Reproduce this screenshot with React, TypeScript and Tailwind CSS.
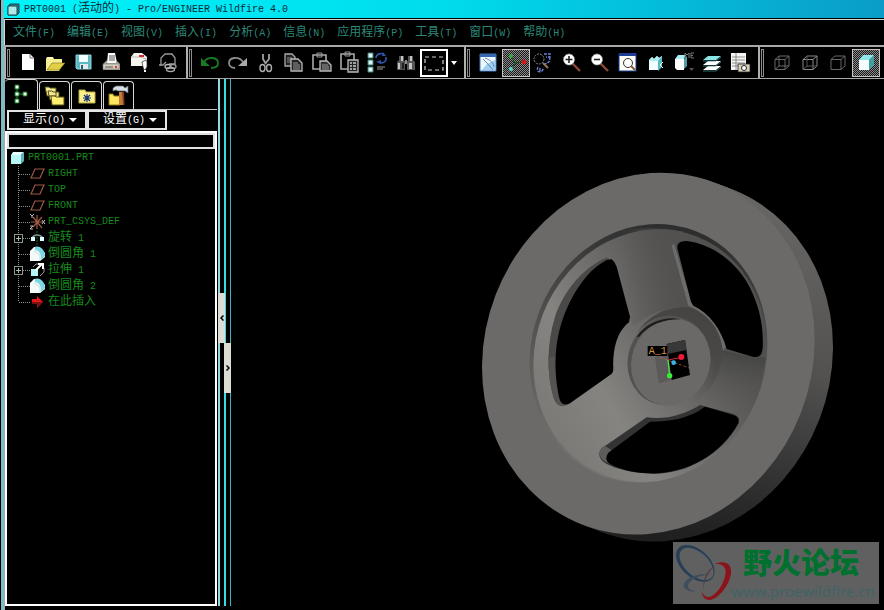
import { ReactNode, useState } from 'react'

interface Tool {
  name: string
  icon: ReactNode
}

interface TreeNode {
  label: string
  icon: ReactNode
  expandable?: boolean
}

const menus = ['文件(F)', '编辑(E)', '视图(V)', '插入(I)', '分析(A)', '信息(N)', '应用程序(P)', '工具(T)', '窗口(W)', '帮助(H)']

// Chinese runs are set two cells wide, latin runs one cell wide
function Mixed({ text }: { text: string }) {
  return (
    <>
      {text.split(/([\u4e00-\u9fff]+)/).map((part, i) => (
        <span key={i} className={i % 2 ? 'text-[12px]' : 'text-[10px]'}>{part}</span>
      ))}
    </>
  )
}

function Icon({ children, size = 24 }: { children: ReactNode; size?: number }) {
  return (
    <svg width={size} height={size} viewBox={`0 0 ${size} ${size}`} fill="none" className="shrink-0" aria-hidden="true">
      {children}
    </svg>
  )
}

const magnifier = (
  <>
    <path d="M12 12l8 8" stroke="#8a4a3a" strokeWidth="2.4" />
    <circle cx="9" cy="8.500" r="5.500" fill="#fff" stroke="#999" strokeDasharray="2 1" />
  </>
)

const cube = 'M5 8.500h10v10H5zM5 8.500L9 5h10l-4 3.500M19 5v10l-4 3.500'

const fileTools: Tool[] = [
  {
    name: '新建',
    icon: <Icon><path d="M6 3h8l4 4v12H6z" fill="#fff" /><path d="M14 3v4h4" stroke="#777" /></Icon>,
  },
  {
    name: '打开',
    icon: <Icon><path d="M2 8l1-2h6l1 2h8v4H2z" fill="#fff7b0" /><path d="M2 8v12h13l5-8h-2V8" fill="#f6ee90" /><path d="M3 19l5-7h13l-6 7z" fill="#e3cf45" stroke="#7d7020" strokeWidth=".6" /></Icon>,
  },
  {
    name: '保存',
    icon: <Icon><path d="M4 4h15v14H5l-1-1z" fill="#5bb9c4" stroke="#8fd6da" /><path d="M7 4h9v7H7z" fill="#f4ffff" /><path d="M8 13h8v5H8z" fill="#e8e8e8" /><path d="M9 14h2v4H9z" fill="#206070" /></Icon>,
  },
  {
    name: '打印',
    icon: <Icon><path d="M8 2h7l2 10H7z" fill="#fff" /><path d="M9 5h6M9 7h6M9 9h6" stroke="#555" /><path d="M3 13l4-4v3h9V9l4 4v6H3z" fill="#a9a698" /><path d="M3 13h16v5H3z" fill="#d4d0c2" stroke="#777" strokeWidth=".6" /><path d="M5 16h8" stroke="#555" /><path d="M15 15h2v2h-2z" fill="#d33" /></Icon>,
  },
  {
    name: '发送',
    icon: <Icon><path d="M3 6l3-4h8l5 4v9H3z" fill="#f4f4ee" /><path d="M3 6h9l7 2" stroke="#b9b9b0" /><path d="M11 4h5v2h-5z" fill="#c33" /><path d="M14 11l4-2 1 2v5l-2 3h-1l-1-3z" fill="#fff" stroke="#222" strokeWidth=".7" /><path d="M16 19h2v2h-2z" fill="#fff" /></Icon>,
  },
  {
    name: '超链接',
    icon: <Icon><path d="M5 15V7l4-4h7l3 4v6h-6M3 14h4l3-3" stroke="#999" strokeWidth="1.3" /><ellipse cx="12" cy="15.500" rx="3" ry="2" stroke="#bbb" strokeWidth="1.300" /><ellipse cx="17" cy="15.500" rx="3" ry="2" stroke="#999" strokeWidth="1.300" /><ellipse cx="14.500" cy="18.500" rx="4" ry="2" stroke="#aaa" strokeWidth="1.300" /></Icon>,
  },
]

const editTools: Tool[] = [
  {
    name: '撤消',
    icon: <Icon><path d="M6 11c4-6 14-5 14 1 0 4-4 5-7 5" stroke="#187a22" strokeWidth="1.8" /><path d="M3 7v8h9z" fill="#187a22" /></Icon>,
  },
  {
    name: '重做',
    icon: <Icon><path d="M17 11C13 5 3 6 3 12c0 4 4 5 6 5" stroke="#8c8c8c" strokeWidth="1.8" /><path d="M21 7v8h-9z" fill="#aaa" /></Icon>,
  },
  {
    name: '剪切',
    icon: <Icon><path d="M9 3v5l3 5M15 3v5l-4 5" stroke="#a0a0a0" strokeWidth="1.8" /><ellipse cx="8.500" cy="17" rx="2.500" ry="3.500" stroke="#aaa" strokeWidth="1.4" /><ellipse cx="15" cy="17" rx="2.500" ry="3.500" stroke="#aaa" strokeWidth="1.4" /></Icon>,
  },
  {
    name: '复制',
    icon: <Icon><path d="M3 3h7l3 3v9H3z" fill="#222" stroke="#aaa" strokeWidth="1.3" /><path d="M5 7h5M5 9h5M5 11h5" stroke="#888" /><path d="M9 8h7l4 4v8H9z" fill="#222" stroke="#bbb" strokeWidth="1.3" /><path d="M11 12h5M11 14h7M11 16h7M11 18h7" stroke="#999" /></Icon>,
  },
  {
    name: '粘贴',
    icon: <Icon><path d="M3 4h13v14H3z" stroke="#aaa" strokeWidth="1.6" /><path d="M7 2h5v4H7z" stroke="#999" /><path d="M10 10h7l4 4v6H10z" fill="#333" stroke="#bbb" strokeWidth="1.3" /><path d="M12 14h6M12 16h7M12 18h7" stroke="#999" /></Icon>,
  },
  {
    name: '选择性粘贴',
    icon: <Icon><path d="M3 3h13v15H3z" stroke="#aaa" strokeWidth="1.6" /><path d="M7 1h5v4H7z" stroke="#999" /><path d="M10 9h10v12H10z" fill="#222" stroke="#bbb" strokeWidth="1.3" /><path d="M12 12h2M15 12h3M12 15h2M15 15h3M12 18h2M15 18h3" stroke="#ccc" strokeWidth="1.5" /></Icon>,
  },
  {
    name: '再生',
    icon: <Icon><path d="M2 2h5v5H2zM2 9h5v5H2zM2 16h5v5H2z" fill="#d8f4f0" stroke="#3d7f78" /><path d="M10 7c0-4 6-6 8-3M20 6c1 5-4 7-7 5" stroke="#2c54a8" strokeWidth="1.600" /><path d="M17 1l3 4h-4zM10 11l5-2v4z" fill="#2c54a8" /><path d="M11 16h8M11 18h6" stroke="#999" /></Icon>,
  },
  {
    name: '查找',
    icon: <Icon><path d="M5 5h5v5h1v9H3v-8l2-2zM14 5h5v4l2 2v8h-8v-9h1z" fill="#555" /><path d="M7 5h2v5H7zM16 5h2v5h-2zM4 12h2v6H4zM15 12h3v6h-3z" fill="#c4c4c4" /><path d="M11 9h2v4h-2z" fill="#888" /><path d="M8 12h2v6H8z" fill="#222" /></Icon>,
  },
]

const viewTools: Tool[] = [
  {
    name: '重画',
    icon: <Icon><path d="M4 3h16v17H4z" fill="#eef9ff" stroke="#3d78c0" /><path d="M4 3h16v3H4z" fill="#3568ae" /><path d="M6 19l5-6 8-4v10z" fill="#9fcff2" /><path d="M7 8l4 4 6 7M9 7c6 2 9 6 9 9" stroke="#456f99" strokeWidth=".8" /></Icon>,
  },
  {
    name: '旋转中心',
    icon: <Icon><path d="M7 6l4 6 8-1M11 12l-3 6" stroke="#164d22" strokeWidth="1.2" /><circle cx="7" cy="5" r="2" fill="#2fae3c" /><circle cx="20" cy="11" r="2.500" fill="#d01818" /><circle cx="7" cy="18" r="2" fill="#58d8c8" /></Icon>,
  },
  {
    name: '定向模式',
    icon: <Icon><circle cx="7" cy="8" r="5" stroke="#888" strokeDasharray="2 1" /><path d="M11 12l5 5" stroke="#9a7a5a" strokeWidth="2" /><path d="M12 3h6v3h-4M17 6c2 3 0 6-4 7M6 16c-2 4 1 6 4 4l2-3M8 17v3" stroke="#6c7ed0" strokeWidth="1.4" strokeDasharray="3 1" /></Icon>,
  },
  {
    name: '放大',
    icon: <Icon>{magnifier}<path d="M9 5v7M5.500 8.500h7" stroke="#222" strokeWidth="1.600" /></Icon>,
  },
  {
    name: '缩小',
    icon: <Icon>{magnifier}<path d="M6 8.500h6" stroke="#222" strokeWidth="1.600" /></Icon>,
  },
  {
    name: '重新调整',
    icon: <Icon><path d="M3 3h17v17H3z" fill="#fdfdf5" stroke="#1a3f95" /><path d="M3 2h17v3H3z" fill="#1a3f95" /><circle cx="12" cy="12" r="4.500" fill="#fff" stroke="#333" /><path d="M15 15l4 4" stroke="#8a5a3a" strokeWidth="2" /></Icon>,
  },
  {
    name: '重定向',
    icon: <Icon><path d="M5 9l3-3 2 2 3-3 2 2 3-2v10l-4 4H5z" fill="#f4ffff" /><path d="M14 9l4-4v11l-4 4z" fill="#5ab9c0" /><path d="M5 9l3-3 2 2 3-3 2 2 3-2-4 5H5z" fill="#a9eef0" /><path d="M19 11l-3 3 3 3" stroke="#fff" /></Icon>,
  },
  {
    name: '已命名视图',
    icon: <Icon><path d="M3 8h9v11H5l-2-2z" fill="#fff" /><path d="M3 8l3-4h8l-2 4z" fill="#a9eef0" /><path d="M12 8l3-3v10l-3 3z" fill="#4f9da5" /><path d="M13 2v5M13 2l2 2 2-2v5M22 2h-3v5h3M19 4.500h2" stroke="#777" /><path d="M17 17h5l-2.500 3z" fill="#555" /></Icon>,
  },
  {
    name: '层',
    icon: <Icon><path d="M3 19l5-4h13l-5 4z" fill="#fff" /><path d="M3 14l5-4h13l-5 4z" fill="#fff" /><path d="M3 9l5-4h13l-5 4z" fill="#8be4e4" /><path d="M3 15h13l5-4M3 10h13l5-4M3 20h13l5-4" stroke="#3c8585" strokeWidth=".8" /></Icon>,
  },
  {
    name: '视图管理器',
    icon: <Icon><path d="M3 2h15v17H3z" fill="#f4f4f0" /><path d="M4 6h13M4 9h13M4 12h13M4 15h13M8 2v17" stroke="#777" strokeWidth=".8" /><path d="M10 13h12v8H10z" fill="#d7d2bd" stroke="#222" strokeWidth=".8" /><circle cx="16" cy="17" r="2.500" fill="#fff" stroke="#222" /></Icon>,
  },
]

const displayTools: Tool[] = [
  { name: '线框', icon: <Icon><path d={cube} stroke="#666" /><path d="M9 5v10h10M9 15l-4 3.500" stroke="#666" /></Icon> },
  { name: '隐藏线', icon: <Icon><path d={cube} stroke="#888" /><path d="M9 5v10h10M9 15l-4 3.500" stroke="#555" /></Icon> },
  { name: '无隐藏线', icon: <Icon><path d={cube} stroke="#666" /></Icon> },
  {
    name: '着色',
    icon: <Icon><path d="M5 9h10v10H5z" fill="#f6ffff" /><path d="M5 9l4-5h11l-5 5z" fill="#8fe6e8" /><path d="M15 9l5-5v10l-5 5z" fill="#3fa0a4" /></Icon>,
  },
]

const foldersIcon = (
  <Icon><path d="M2 3h4l1 1h6v8H4zM5 7h4l1 1h6v8H7z" fill="#f5ea90" stroke="#554c18" /><path d="M8 12h4l1 1h8v8H9z" fill="#ffef70" stroke="#554c18" /></Icon>
)
const favIcon = (
  <Icon><path d="M4 6h6l1 2h9v11H4z" fill="#ffef8a" stroke="#b8ac45" /><path d="M12 10v8M8 14h8M9 11l6 6M15 11l-6 6" stroke="#13357a" strokeWidth="1.2" /></Icon>
)
const hammerIcon = (
  <Icon><path d="M2 10h4l1 2h6v9H2z" fill="#ffe860" stroke="#8a7a20" /><path d="M12 8h4l1 13h-5z" fill="#c8783a" /><path d="M15 8l1 13h1.500l-.5-13z" fill="#7d4418" /><path d="M6 4l3-2h7l2 2 3-2v7l-3-2h-7L9 6 6 7z" fill="#d4e0e4" stroke="#667" strokeWidth=".7" /></Icon>
)
const treeIcon = (
  <Icon><path d="M8 4v14M8 11h9" stroke="#136d20" strokeWidth="1.500" /><path d="M6 2h4v4H6zM6 9h4v4H6zM14 9h4v4h-4zM6 16h4v4H6z" fill="#eaffea" stroke="#136d20" /></Icon>
)

const plane = <Icon size={16}><path d="M1 12L5 3h9l-4 9z" stroke="#a05a44" strokeWidth="1.200" /></Icon>
const round = (
  <Icon size={16}><path d="M0 5l4-4h4l7 6v4l-5 4H0z" fill="#f3fbfa" /><path d="M5 1c5-2 10 3 10 9l-4 4c0-6-1-9-6-10z" fill="#7bd8e0" /><path d="M10 15V9L4 5" stroke="#ccc" strokeWidth=".8" /></Icon>
)

const nodes: TreeNode[] = [
  { label: 'RIGHT', icon: plane },
  { label: 'TOP', icon: plane },
  { label: 'FRONT', icon: plane },
  {
    label: 'PRT_CSYS_DEF',
    icon: <Icon size={16}><path d="M7 1v14M1 8h12M3 3l9 11M12 3L3 13" stroke="#a05a44" strokeWidth="1.2" /><path d="M0 0l2 2 2-2M2 2v2M12 6l3 4M15 6l-3 4M0 12h3l-3 3h3" stroke="#bbb" /></Icon>,
  },
  {
    label: '旋转 1',
    expandable: true,
    icon: <Icon size={16}><path d="M7 1v14" stroke="#176b22" strokeDasharray="2 1" /><path d="M2 8c2-4 8-4 11 0" stroke="#7c9090" strokeWidth="1.600" /><path d="M1 7h4v4H1zM10 7h4v4h-4z" fill="#d9ffff" /></Icon>,
  },
  { label: '倒圆角 1', icon: round },
  {
    label: '拉伸 1',
    expandable: true,
    icon: <Icon size={16}><path d="M1 7h7v7H1z" fill="#b5f4f4" /><path d="M3 5l3-3h3M14 6v4l-4 4" stroke="#999" /><path d="M6 8l6-6M8 2h5v5" stroke="#fff" strokeWidth="2" /></Icon>,
  },
  { label: '倒圆角 2', icon: round },
  { label: '在此插入', icon: <Icon size={16}><path d="M2 5h5V2l6 6-6 6v-4H2z" fill="#e01818" /><path d="M2 8h11l-6 6v-4H2z" fill="#7d1010" /></Icon> },
]

function ToolGroup({ tools, active, children }: { tools: Tool[]; active?: string; children?: ReactNode }) {
  return (
    <div className="flex items-center border-l-2 border-[#b0b0b0] pr-1">
      <span className="mr-1 ml-px h-7 w-[3px] border border-[#8c8c8c]" />
      {tools.map(t => (
        <button
          key={t.name}
          type="button"
          title={t.name}
          aria-label={t.name}
          className={
            t.name === active
              ? 'flex size-7 items-center justify-center border border-[#c4c4c4] bg-[repeating-conic-gradient(#8c8c8c_0_25%,#181818_0_50%)] bg-[length:2px_2px]'
              : 'flex size-7 items-center justify-center'
          }
        >
          {t.icon}
        </button>
      ))}
      {children}
    </div>
  )
}

function DropButton({ text }: { text: string }) {
  return (
    <button type="button" className="flex h-5 w-20 items-center justify-end gap-1 border-2 border-[#e4e4e4] pr-2 leading-none whitespace-nowrap text-white">
      <span><Mixed text={text} /></span>
      <svg width="8" height="4" aria-hidden="true"><path d="M0 0h8L4 4z" fill="#fff" /></svg>
    </button>
  )
}

function Handwheel() {
  const tilt = 'rotate(-69 535 581)'
  // keeps gradients upright inside the tilted ellipses
  const upright = 'rotate(69 535 581)'
  return (
    <svg width="380" height="390" viewBox="0 0 1140 1170" fill="none" role="img" aria-label="PRT0001">
      <defs>
        <linearGradient id="side" x1="0" y1="40" x2="0" y2="1130" gradientUnits="userSpaceOnUse" gradientTransform={upright}>
          <stop offset="0" stopColor="#686765" />
          <stop offset=".25" stopColor="#605f5d" />
          <stop offset=".55" stopColor="#525150" />
          <stop offset=".78" stopColor="#383838" />
          <stop offset="1" stopColor="#1e1e1e" />
        </linearGradient>
        <linearGradient id="web" x1="240" y1="800" x2="760" y2="480" gradientUnits="userSpaceOnUse" gradientTransform={upright}>
          <stop offset="0" stopColor="#7b7a77" />
          <stop offset=".3" stopColor="#858481" />
          <stop offset=".65" stopColor="#6a6967" />
          <stop offset="1" stopColor="#525150" />
        </linearGradient>
        <linearGradient id="lip" x1="600" y1="190" x2="450" y2="970" gradientUnits="userSpaceOnUse" gradientTransform={upright}>
          <stop offset="0" stopColor="#2c2c2c" />
          <stop offset=".25" stopColor="#434241" />
          <stop offset=".6" stopColor="#5c5b59" />
          <stop offset="1" stopColor="#767572" />
        </linearGradient>
        <linearGradient id="spoke" x1="450" y1="0" x2="640" y2="0" gradientUnits="userSpaceOnUse">
          <stop offset="0" stopColor="#525150" stopOpacity="0" />
          <stop offset="1" stopColor="#525150" />
        </linearGradient>
        <linearGradient id="spokeRight" x1="795" y1="575" x2="760" y2="750" gradientUnits="userSpaceOnUse">
          <stop offset="0" stopColor="#454544" />
          <stop offset="1" stopColor="#605f5d" stopOpacity="0" />
        </linearGradient>
        <linearGradient id="hubShade" x1="740" y1="480" x2="640" y2="720" gradientUnits="userSpaceOnUse">
          <stop offset="0" stopColor="#454443" />
          <stop offset=".4" stopColor="#494847" />
          <stop offset="1" stopColor="#555" stopOpacity="0" />
        </linearGradient>
      </defs>

      {/* rim thickness, swept back from the front face */}
      {[55, 44, 33, 22, 11].map(d => (
        <g key={d} transform={`translate(${d} ${d * 0.38})`}>
          <ellipse cx="535" cy="581" rx="550" ry="491" transform={tilt} fill="url(#side)" />
        </g>
      ))}
      <ellipse cx="535" cy="581" rx="550" ry="491" transform={tilt} fill="#6b6a68" />

      {/* recess and web */}
      <ellipse cx="536" cy="581" rx="393" ry="351" transform={tilt} fill="url(#lip)" />
      <g transform="translate(5 7)">
        <ellipse cx="536" cy="581" rx="384" ry="345" transform={tilt} fill="url(#web)" />
      </g>
      <path d="M436 215Q530 195 640 215L605 250 655 440Q560 440 490 500L480 470 430 300z" fill="url(#spoke)" />
      <path d="M760 568L887 595Q870 690 812 775L690 735Q730 680 735 570z" fill="url(#spokeRight)" />

      {/* slot walls */}
      <path d="M410 293C340 320 280 395 255 470C230 550 230 640 250 710Q258 740 282 738L300 730 425 300z" fill="#4a4948" />
      <path d="M235 590Q235 660 250 710Q258 740 282 738L270 590z" fill="#545352" />
      <path d="M605 258Q605 240 625 240C730 245 800 310 840 370C880 440 890 510 882 575Q878 596 855 593L760 572C750 510 715 460 655 437z" fill="#50504e" />
      <path d="M605 258L612 250 665 430C720 465 755 510 768 560L760 572C748 515 710 460 655 437z" fill="#6d6c6a" />
      <path d="M388 880Q390 865 405 858L530 772C590 780 640 765 690 735L790 762Q812 770 806 790C750 890 640 950 530 940C470 937 420 920 400 905Q387 895 388 880z" fill="#333" />
      <path d="M388 880Q390 865 405 858L425 870 410 890 420 912Q387 900 388 880z" fill="#5d5c5a" />

      {/* slots */}
      <path d="M425 298Q435 305 440 320L480 470 477 487C440 515 428 570 430 625Q430 640 420 645L300 730Q275 742 268 715C248 620 252 520 300 425C330 365 370 320 410 300z" fill="#000" />
      <path d="M622 265Q620 242 650 243C720 250 790 300 830 365C868 430 882 500 878 565Q876 597 848 590L770 567C755 510 720 460 670 437L663 425z" fill="#000" />
      <path d="M420 912Q400 900 415 878L540 785C600 785 660 775 705 740L790 765Q810 770 805 790C750 890 640 945 530 940C480 937 445 925 420 912z" fill="#000" />

      {/* hub */}
      <path d="M655 440C735 465 775 550 750 620C735 690 660 760 580 750C640 740 720 690 722 600C720 520 660 468 600 468Q540 470 500 520Q550 440 655 440z" fill="url(#hubShade)" />
      <ellipse cx="596" cy="602" rx="135" ry="122" transform="rotate(-69 596 602)" fill="#52514f" />
      <ellipse cx="602" cy="606" rx="132" ry="117" transform="rotate(-69 602 606)" fill="#6a6967" />
      <path d="M500 530Q540 476 610 475L632 478Q550 478 508 530z" fill="#1c1c1c" />

      {/* section square, axis tag and spin centre */}
      <path d="M555 592L597 582 604 660 566 670z" fill="#5b5a58" />
      <path d="M590 552L645 540 660 645 605 660z" fill="#000" />
      <path d="M590 552L645 540 650 570 592 582z" fill="#383838" />
      <path d="M533 558h59v30h-59z" fill="#000" />
      <text x="536" y="582" fontSize="30" fontFamily="Liberation Mono, monospace" fill="#d8934a">A_1</text>
      <path d="M570 592l88 32" stroke="#c96a50" strokeWidth="2" strokeDasharray="9 6" />
      <path d="M595 600l38-8" stroke="#d52c3c" strokeWidth="3" />
      <path d="M594 600l5 46" stroke="#4be04b" strokeWidth="4" />
      <circle cx="634" cy="591" r="9" fill="#f2183c" />
      <circle cx="611" cy="608" r="7" fill="#38b6e8" />
      <circle cx="599" cy="647" r="8" fill="#38ee38" />
    </svg>
  )
}

function Watermark() {
  return (
    <div className="absolute right-[5px] bottom-[6px] flex h-[62px] w-[206px] bg-[#606060]">
      <svg width="58" height="62" viewBox="0 0 174 186" fill="none" className="shrink-0" aria-hidden="true">
        <g transform="translate(67 64) rotate(42)">
          <path fillRule="evenodd" d="M-68 0a68 42 0 1 0 136 0a68 42 0 1 0-136 0zM-57-1a61 35 0 1 0 122 0a61 35 0 1 0-122 0z" fill="#263f56" />
        </g>
        <path d="M108 98C80 92 34 106 32 130C32 142 48 150 68 148C50 144 42 138 46 126C52 110 82 100 108 98z" fill="#3e4c5c" />
        <path d="M126 72C100 84 88 116 92 142C92 116 104 90 126 72z" fill="#4c3c40" />
        <path d="M126 66C150 54 178 62 174 94C170 130 136 172 110 174C96 174 88 164 86 150C96 168 108 168 120 160C142 144 158 112 158 88C156 70 144 64 126 66z" fill="#8a141a" />
      </svg>
      <div className="flex flex-col">
        <span className="pl-3 font-['Noto_Sans_CJK_SC',sans-serif] text-[29px] leading-[39px] font-black text-[#00702f]">野火论坛</span>
        <span className="font-['Noto_Sans',sans-serif] text-[15px] leading-[20px] text-[#3f6466]">www.proewildfire.cn</span>
      </div>
    </div>
  )
}

export default function App() {
  const [filter, setFilter] = useState('')

  return (
    <div className="flex min-h-screen bg-black pl-px font-['Liberation_Mono','Noto_Sans_CJK_SC',monospace] text-[10px]">
      <div className="w-[3px] shrink-0 bg-[#7cbcc2]" />
      <div className="flex min-w-0 flex-1 flex-col">
        <header className="flex h-[18px] items-center gap-1 bg-linear-to-r from-[#00f4fa] via-[#00dcec] to-[#0a9cc8] pl-[3px] leading-none whitespace-pre text-[#0b2a3a]">
          <svg width="13" height="13" viewBox="0 0 13 13" aria-hidden="true">
            <path d="M1 3l2-2h9v9l-2 2H1z" fill="#3c8088" stroke="#14474f" />
            <path d="M1 3h9v9H1z" fill="#b0e8e8" stroke="#14474f" />
          </svg>
          <h1><Mixed text="PRT0001 (活动的) - Pro/ENGINEER Wildfire 4.0" /></h1>
        </header>

        <nav className="mt-px flex h-[26px] items-center gap-3 border-t border-l border-[#cfd8d4] pl-2 leading-none whitespace-nowrap text-[#2c8878]">
          {menus.map(m => (
            <button key={m} type="button"><Mixed text={m} /></button>
          ))}
        </nav>

        <div className="flex h-[34px] overflow-hidden border-t-2 border-b border-[#a8a8a8]">
          <ToolGroup tools={fileTools} />
          <ToolGroup tools={editTools}>
            <button type="button" aria-label="选取" className="flex size-7 items-center justify-center border-2 border-white">
              <Icon><path d="M3 6h18v13H3z" stroke="#ccc" strokeWidth="1.2" strokeDasharray="4 3" /></Icon>
            </button>
            <button type="button" aria-label="选取选项" className="flex h-7 w-3 items-center justify-center">
              <svg width="6" height="4" aria-hidden="true"><path d="M0 0h6L3 4z" fill="#fff" /></svg>
            </button>
          </ToolGroup>
          <ToolGroup tools={viewTools} active="旋转中心" />
          <ToolGroup tools={displayTools} active="着色" />
        </div>

        <main className="flex flex-1">
          <aside className="flex w-[213px] shrink-0 flex-col border-l border-[#9ab] pb-1">
            {/* navigator tabs */}
            <div className="flex h-[31px] items-end gap-px border-b border-[#c8c8c8]">
              <button type="button" aria-label="模型树" className="-mb-px flex h-[31px] w-[33px] items-center justify-center rounded-t-sm border-t border-r border-[#d8d8d8] bg-black">{treeIcon}</button>
              <button type="button" aria-label="文件夹浏览器" className="flex h-7 w-[31px] items-center justify-center rounded-t-sm border border-b-0 border-[#d8d8d8]">{foldersIcon}</button>
              <button type="button" aria-label="收藏夹" className="flex h-7 w-[31px] items-center justify-center rounded-t-sm border border-b-0 border-[#d8d8d8]">{favIcon}</button>
              <button type="button" aria-label="连接" className="flex h-7 w-[31px] items-center justify-center rounded-t-sm border border-b-0 border-[#d8d8d8]">{hammerIcon}</button>
            </div>

            <div className="flex pl-0.5">
              <DropButton text="显示(O)" />
              <DropButton text="设置(G)" />
            </div>

            <div className="mt-px flex flex-1 flex-col border-2 border-white">
              <input
                type="text"
                aria-label="搜索"
                value={filter}
                onChange={e => setFilter(e.target.value)}
                className="h-4 w-full border-2 border-[#e0e0e0] bg-black px-1 text-[#2c9a2c] outline-none"
              />

              {/* model tree */}
              <div className="pt-px pl-1 leading-none whitespace-pre text-[#178a1c]">
                <div className="flex h-4 items-center gap-px">
                  <Icon size={16}><path d="M0 5h10v9H0z" fill="#b8f6f6" /><path d="M0 5l2-3h11l-3 3z" fill="#e8ffff" /><path d="M10 5l3-3v9l-3 3z" fill="#5fb4b8" /></Icon>
                  PRT0001.PRT
                </div>
                <ul>
                  {nodes.map((n, i) => (
                    <li key={n.label} className="flex h-4 items-center">
                      <svg width="19" height="16" fill="none" className="shrink-0" aria-hidden="true">
                        <path d={i === nodes.length - 1 ? 'M7.500 0v8' : 'M7.500 0v16'} stroke="#8c8c8c" strokeDasharray="1 1" />
                        <path d="M8 8.500h11" stroke="#8c8c8c" strokeDasharray="1 1" />
                        {n.expandable && (
                          <>
                            <rect x="3.500" y="4.500" width="8" height="8" fill="#000" stroke="#8c9a8c" />
                            <path d="M5 8.500h5M7.500 6v5" stroke="#aab8aa" />
                          </>
                        )}
                      </svg>
                      {n.icon}
                      <span className="pl-0.5"><Mixed text={n.label} /></span>
                    </li>
                  ))}
                </ul>
              </div>
            </div>
          </aside>

          {/* splitters */}
          <div className="relative mb-1 flex w-[14px] shrink-0 gap-1 pl-px">
            <span className="w-0.5 bg-[#8fdde0]" />
            <span className="w-0.5 bg-[#38dce6]" />
            <span className="w-px bg-[#38b4bc]" />
            <button type="button" aria-label="收起导航器" className="absolute top-[214px] left-px flex h-[50px] w-[7px] items-center justify-center bg-[#dcdcd4]">
              <svg width="4" height="6" fill="none" aria-hidden="true"><path d="M3.500.5L1 3l2.500 2.500" stroke="#000" strokeWidth="1.500" /></svg>
            </button>
            <button type="button" aria-label="展开浏览器" className="absolute top-[264px] left-[7px] flex h-[50px] w-[7px] items-center justify-center bg-[#dcdcd4]">
              <svg width="4" height="6" fill="none" aria-hidden="true"><path d="M.5.5L3 3 .5 5.500" stroke="#000" strokeWidth="1.500" /></svg>
            </button>
          </div>

          <section className="relative min-w-0 flex-1 overflow-hidden">
            <div className="absolute top-[81px] right-[34px]">
              <Handwheel />
            </div>
            <Watermark />
          </section>
        </main>
      </div>
    </div>
  )
}
